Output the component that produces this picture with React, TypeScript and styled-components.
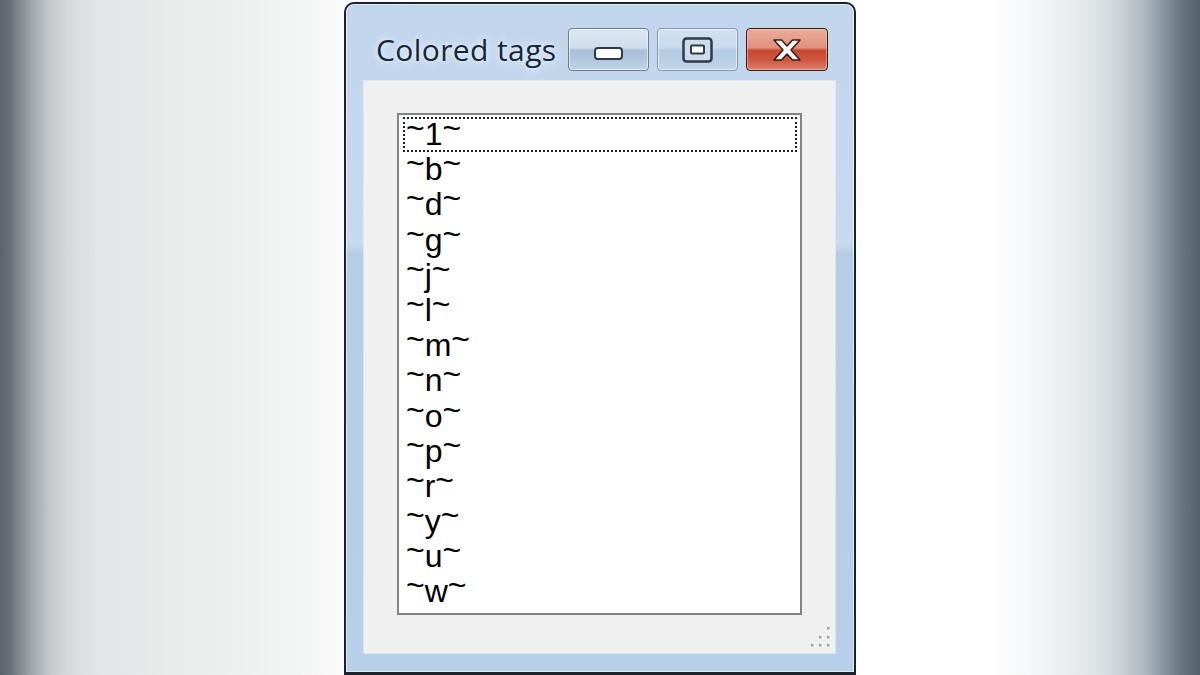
import React from "react";
import styled, { createGlobalStyle } from "styled-components";

const GlobalStyle = createGlobalStyle`
  html, body {
    margin: 0;
    padding: 0;
  }
  body {
    width: 1200px;
    height: 675px;
    overflow: hidden;
  }
`;

const Desktop = styled.div`
  width: 1200px;
  height: 675px;
  box-sizing: border-box;
  padding-top: 2px;
  display: flex;
  justify-content: center;
  align-items: flex-start;
  overflow: hidden;
  background: linear-gradient(
    to right,
    #5d656c 0px,
    #697177 10px,
    #9ca2a7 30px,
    #c4c8cb 50px,
    #d8dbdd 70px,
    #e3e5e6 100px,
    #eaebeb 180px,
    #f1f2f2 280px,
    #fafafa 340px,
    #ffffff 420px,
    #ffffff 990px,
    #f3f5f6 1040px,
    #e2e6e9 1090px,
    #ccd3d7 1120px,
    #adb7be 1145px,
    #86939c 1165px,
    #67757f 1182px,
    #55626d 1200px
  );
`;

const Window = styled.div`
  width: 512px;
  height: 673px;
  box-sizing: border-box;
  border: 2px solid #1b2229;
  border-bottom-width: 3px;
  border-radius: 10px 10px 0 0;
  background: linear-gradient(
    to bottom,
    #c1d6ed 0px,
    #c5d9ef 240px,
    #b6cde7 250px,
    #b7cfe8 100%
  );
  box-shadow: inset 0 0 0 1px rgba(255, 255, 255, 0.6);
  display: flex;
  flex-direction: column;
`;

const TitleBar = styled.div`
  height: 77px;
  box-sizing: border-box;
  padding: 24px 26px 0 30px;
  display: flex;
  align-items: flex-start;
`;

const TitleRow = styled.div`
  flex: 1;
  height: 43px;
  display: flex;
  align-items: center;
`;

const Title = styled.span`
  font-family: "Open Sans", "Noto Sans", sans-serif;
  font-size: 30px;
  color: #17253a;
  letter-spacing: 0.4px;
  text-shadow: 0 0 8px rgba(255, 255, 255, 0.85), 0 0 3px rgba(255, 255, 255, 0.6);
  white-space: nowrap;
`;

const Controls = styled.div`
  display: flex;
  gap: 8px;
`;

type Variant = "min" | "max" | "close";

const CaptionButton = styled.div<{ $variant: Variant }>`
  width: ${(p) => (p.$variant === "close" ? 82 : 81)}px;
  height: 43px;
  box-sizing: border-box;
  border-radius: 4px;
  display: flex;
  justify-content: center;
  align-items: center;
  border: 1px solid
    ${(p) =>
      p.$variant === "close" ? "#3a1b14" : p.$variant === "min" ? "#6a7d92" : "#8599b0"};
  box-shadow: inset 0 0 0 1px
    ${(p) => (p.$variant === "close" ? "rgba(255,200,190,0.55)" : "rgba(255,255,255,0.55)")};
  padding-top: ${(p) => (p.$variant === "min" ? 8 : 0)}px;
  background: ${(p) =>
    p.$variant === "close"
      ? "linear-gradient(to bottom, #eaab9b 0%, #df917d 46%, #c9472f 52%, #cf5a42 78%, #dc8470 100%)"
      : p.$variant === "min"
      ? "linear-gradient(to bottom, #dbe6f2 0%, #cfdded 46%, #a9bfd7 52%, #b3c8de 78%, #c2d5e9 100%)"
      : "linear-gradient(to bottom, #d2e1f1 0%, #c8daee 46%, #b4cbe3 52%, #b9cfe6 78%, #c3d7eb 100%)"};
`;

const ClientArea = styled.div`
  position: relative;
  height: 572px;
  margin: 0 19px 0 18px;
  box-sizing: border-box;
  padding: 32px 33px 0 33px;
  background: #f0f0f0;
  box-shadow: 0 0 0 1px rgba(255, 255, 255, 0.45);
`;

const ListBox = styled.ul`
  list-style: none;
  margin: 0;
  width: 405px;
  height: 502px;
  box-sizing: border-box;
  border: 2px solid #838383;
  padding: 2px 3px 0 4px;
  background: #ffffff;
  overflow: hidden;
`;

const Item = styled.li<{ $focused?: boolean }>`
  height: 35.2px;
  line-height: 35.2px;
  padding-left: 3px;
  font-family: "Liberation Sans", Arial, sans-serif;
  font-size: 32px;
  color: #000000;
  white-space: nowrap;
  outline: ${(p) => (p.$focused ? "2px dotted #1c1c1c" : "none")};
  outline-offset: -2px;
`;

const Tilde = styled.span`
  line-height: 0;
  vertical-align: 6px;
`;

const Grip = styled.svg`
  position: absolute;
  right: 4px;
  bottom: 4px;
  width: 24px;
  height: 24px;
`;

const MinGlyph = () => (
  <svg width="29" height="13" viewBox="0 0 29 13">
    <rect x="1" y="1" width="27" height="11" rx="3" fill="#ffffff" stroke="#2c3a4a" strokeWidth="2" />
  </svg>
);

const MaxGlyph = () => (
  <svg width="31" height="26" viewBox="0 0 31 26">
    <rect x="1.5" y="1.5" width="28" height="23" rx="3" fill="#cddbea" stroke="#2c3a4a" strokeWidth="2.5" />
    <rect x="9" y="8.5" width="13" height="8" rx="1" fill="#ffffff" stroke="#2c3a4a" strokeWidth="2" />
  </svg>
);

const CloseGlyph = () => (
  <svg width="32" height="24" viewBox="0 0 32 24">
    <polygon
      points="3,2 10.5,2 16,8 21.5,2 29,2 20,12 29,22 21.5,22 16,16 10.5,22 3,22 12,12"
      fill="#ffffff"
      stroke="#3b1c16"
      strokeWidth="1.6"
      strokeLinejoin="round"
    />
  </svg>
);

const gripDots: [number, number][] = [
  [21, 3],
  [13, 12],
  [21, 12],
  [5, 20],
  [13, 20],
  [21, 20],
];

const items = ["1", "b", "d", "g", "j", "l", "m", "n", "o", "p", "r", "y", "u", "w"];

export default function App() {
  return (
    <>
      <GlobalStyle />
      <Desktop>
        <Window>
          <TitleBar>
            <TitleRow>
              <Title>Colored tags</Title>
            </TitleRow>
            <Controls>
              <CaptionButton $variant="min">
                <MinGlyph />
              </CaptionButton>
              <CaptionButton $variant="max">
                <MaxGlyph />
              </CaptionButton>
              <CaptionButton $variant="close">
                <CloseGlyph />
              </CaptionButton>
            </Controls>
          </TitleBar>
          <ClientArea>
            <ListBox>
              {items.map((t, i) => (
                <Item key={t} $focused={i === 0}>
                  <Tilde>~</Tilde>
                  {t}
                  <Tilde>~</Tilde>
                </Item>
              ))}
            </ListBox>
            <Grip viewBox="0 0 24 24">
              {gripDots.map(([x, y]) => (
                <g key={`${x}-${y}`}>
                  <rect x={x} y={y} width="2.5" height="2.5" fill="#ffffff" />
                  <rect x={x - 1} y={y - 1} width="2.5" height="2.5" fill="#9a9a9a" />
                </g>
              ))}
            </Grip>
          </ClientArea>
        </Window>
      </Desktop>
    </>
  );
}
